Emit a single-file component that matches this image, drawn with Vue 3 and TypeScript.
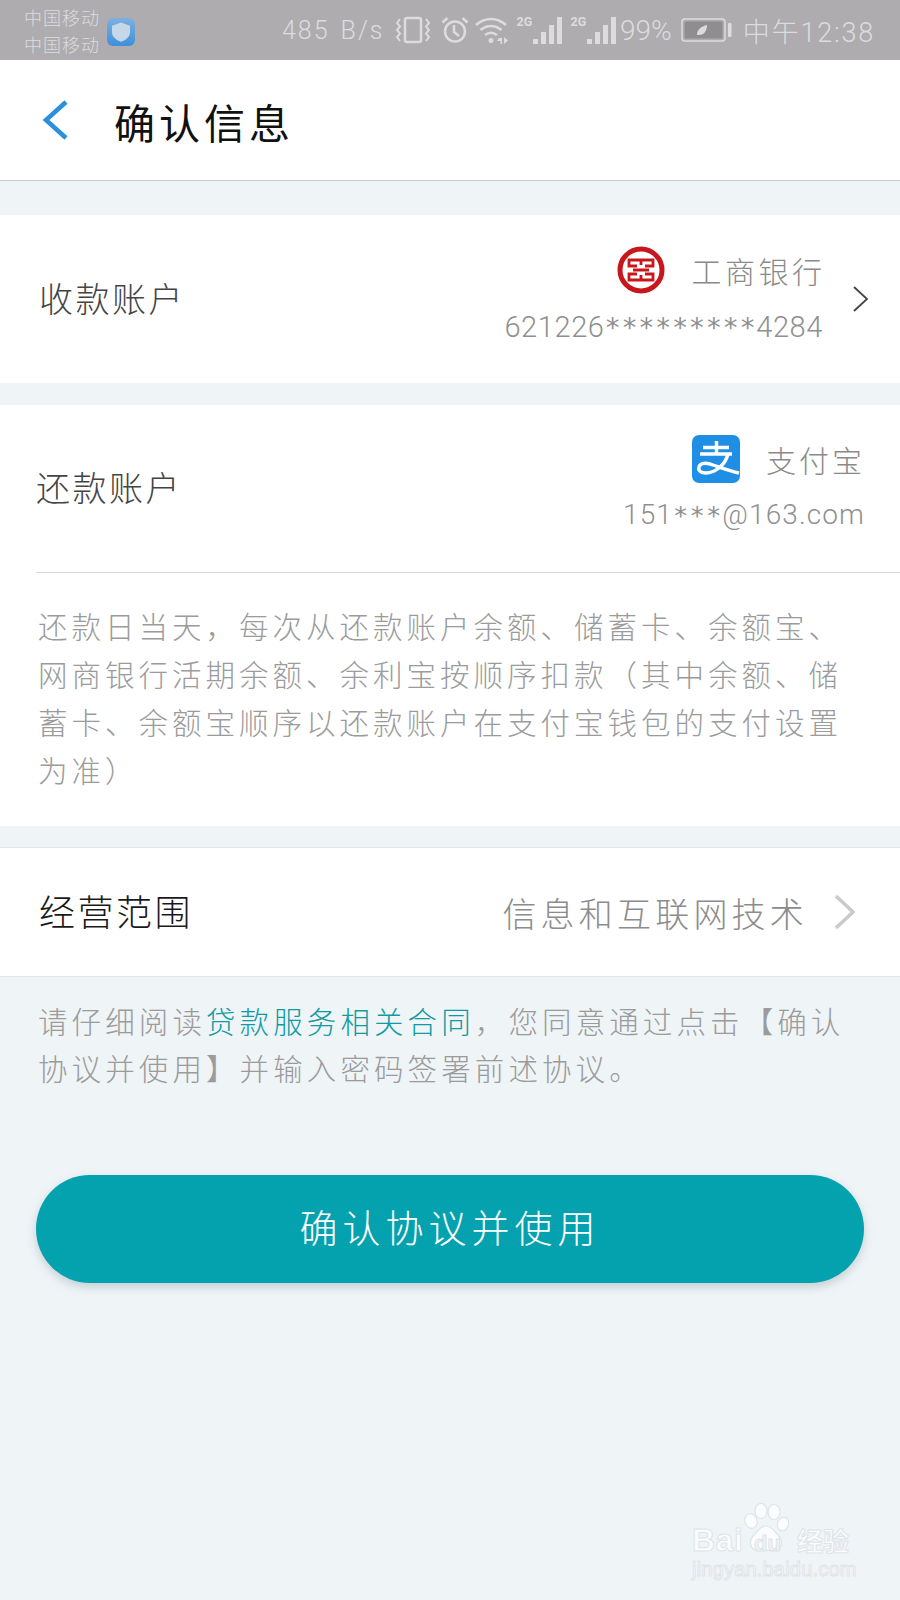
<script setup lang="ts">
const signalBars: number[] = [0, 1]
</script>

<template>
  <div class="page">
    <div class="status">
      <div class="carriers">
        <span>中国移动</span>
        <span>中国移动</span>
      </div>
      <svg class="shield" width="28" height="28" viewBox="0 0 28 28">
        <defs>
          <linearGradient id="sg" x1="0" y1="0" x2="0" y2="1">
            <stop offset="0" stop-color="#7fb0de" />
            <stop offset="1" stop-color="#3f8fdc" />
          </linearGradient>
        </defs>
        <rect width="28" height="28" rx="6" fill="url(#sg)" />
        <path d="M14 4.500l9 3.200v6.300c0 5-4 8-9 9.800-5-1.800-9-4.800-9-9.800V7.700z" fill="#c5d8ea" />
      </svg>
      <div class="status-right">
        <span class="speed">485 B/s</span>
        <svg class="ic-vib" width="36" height="28" viewBox="0 0 36 28" fill="none" stroke="#dcdcde">
          <rect x="10" y="2" width="16" height="24" rx="2" stroke-width="2.500" />
          <path d="M5 3L2 7l3 3.500L2 14l3 3.500L2 21l3 4M31 3l3 4-3 3.500L34 14l-3 3.500L34 21l-3 4" stroke-width="2" />
        </svg>
        <svg class="ic-alarm" width="28" height="28" viewBox="0 0 28 28" fill="none" stroke="#dcdcde" stroke-width="2.500">
          <circle cx="14" cy="15.500" r="10" />
          <path d="M13 9v7l5 4M1.500 6.500l5-4.500M26.500 6.500l-5-4.500" />
        </svg>
        <svg class="ic-wifi" width="34" height="28" viewBox="0 0 34 28" fill="none" stroke="#dcdcde" stroke-width="2.500">
          <path d="M1 9c9-8 21-8 30 0M5.500 14c6.500-5.500 14.500-5.500 21 0M10 19c4-3 8-3 12 0" />
          <circle cx="16" cy="24.500" r="2.500" fill="#dcdcde" stroke="none" />
          <path d="M24 22h3v6h-1.500v-3H22zM29 21l4 3.500-4 3.500z" fill="#dcdcde" stroke="none" />
        </svg>
        <div class="signal" v-for="s in signalBars" :key="s">
          <span class="g2">2G</span>
          <i class="b1"></i><i class="b2"></i><i class="b3"></i><i class="b4"></i>
        </div>
        <span class="pct">99%</span>
        <svg class="ic-batt" width="52" height="26" viewBox="0 0 52 26">
          <rect x="1" y="2" width="43" height="22" rx="3" fill="none" stroke="#dcdcde" stroke-width="1.500" />
          <rect x="3.500" y="4.500" width="38" height="17" rx="1.500" fill="#8f8d90" />
          <path d="M16 18c0-6 5-9 10-10 0 6-3 10-8 10z" fill="#dcdcde" />
          <rect x="47" y="6" width="3.500" height="14" rx="1" fill="#dcdcde" />
        </svg>
        <span class="time">中午12:38</span>
      </div>
    </div>

    <header class="nav">
      <svg width="28" height="40" viewBox="0 0 28 40" fill="none">
        <path d="M25 2L5 20l20 18" stroke="#2a8fdc" stroke-width="4.500" />
      </svg>
      <h1>确认信息</h1>
    </header>

    <section class="card receive">
      <span class="label">收款账户</span>
      <div class="acct">
        <div class="acct-name icbc-name">
          <svg width="48" height="48" viewBox="0 0 48 48" fill="none">
            <circle cx="24" cy="24" r="21" stroke="#c8161d" stroke-width="5" />
            <path d="M20 20H12V14H36V20H28M20 28H12V34H36V28H28M16 24H32M24 14V19M24 29V34" stroke="#c8161d" stroke-width="2.800" />
          </svg>
          <span>工商银行</span>
        </div>
        <div class="acct-no no-a">621226<span class="stars">*********</span>4284</div>
      </div>
      <svg class="chev" width="18" height="28" viewBox="0 0 18 28" fill="none">
        <path d="M2 2l13 12L2 26" stroke="#444" stroke-width="1.800" />
      </svg>
    </section>

    <section class="card repay">
      <div class="repay-top">
        <span class="label">还款账户</span>
        <div class="acct">
          <div class="acct-name alipay-name">
            <svg width="48" height="48" viewBox="0 0 48 48">
              <rect width="48" height="48" rx="7" fill="#1f8fe6" />
              <path d="M11 12.500H37M24.500 6V18M8 19H40M36 19C33 31 22 38 14 38 8 38 6 35 7 32 8 28 14 27 21 30 30 33 38 36 47 38" fill="none" stroke="#fff" stroke-width="3.400" />
            </svg>
            <span>支付宝</span>
          </div>
          <div class="acct-no no-b">151<span class="stars">***</span>@163.com</div>
        </div>
      </div>
      <p class="desc">还款日当天，每次从还款账户余额、储蓄卡、余额宝、网商银行活期余额、余利宝按顺序扣款（其中余额、储蓄卡、余额宝顺序以还款账户在支付宝钱包的支付设置为准）</p>
    </section>

    <section class="card scope">
      <span class="label dark">经营范围</span>
      <div class="scope-right">
        <span>信息和互联网技术</span>
        <svg width="26" height="36" viewBox="0 0 26 36" fill="none">
          <path d="M3 2l17 16L3 34" stroke="#c8cacc" stroke-width="3.500" />
        </svg>
      </div>
    </section>

    <p class="agree">请仔细阅读<a>贷款服务相关合同</a>，您同意通过点击【确认协议并使用】并输入密码签署前述协议。</p>

    <button class="confirm" type="button">确认协议并使用</button>

    <div class="mark">
      <span class="bai">Bai</span>
      <svg class="paw" width="46" height="50" viewBox="0 0 46 50" fill="#fbfcfd" stroke="#dfe4e8" stroke-width="1.200">
        <ellipse cx="8" cy="18" rx="6" ry="7.500" transform="rotate(-20 8 18)" />
        <ellipse cx="18" cy="8" rx="6" ry="7.500" />
        <ellipse cx="31" cy="9" rx="6" ry="7.500" />
        <ellipse cx="40" cy="21" rx="5.500" ry="7" transform="rotate(20 40 21)" />
        <path d="M23 23c6 0 8 5 12 9 6 6 4 16-5 16-3 0-4-1-7-1s-4 1-7 1c-9 0-11-10-5-16 4-4 6-9 12-9z" />
      </svg>
      <span class="du">du</span>
      <span class="jy">经验</span>
      <span class="mark-url">jingyan.baidu.com</span>
    </div>
  </div>
</template>

<style>
html, body { margin: 0; padding: 0; }
</style>

<style scoped>
.page {
  position: relative;
  width: 900px;
  height: 1600px;
  overflow: hidden;
  background: #eff4f7;
  font-family: "Noto Sans CJK SC", "Noto Sans", sans-serif;
  font-weight: 300;
}
.status {
  height: 60px;
  background: #aeacaf;
  display: flex;
  align-items: center;
  padding: 0 25px 0 24px;
  box-sizing: border-box;
  color: #dcdcde;
}
.carriers {
  display: flex;
  flex-direction: column;
  font-size: 18px;
  line-height: 27px;
  letter-spacing: 1px;
  width: 80px;
  white-space: nowrap;
  margin-top: 2px;
}
.shield { margin-left: 3px; margin-top: 3px; }
.status-right {
  margin-left: auto;
  display: flex;
  align-items: center;
}
.speed {
  font-family: "Roboto", sans-serif;
  font-weight: 300;
  font-size: 25px;
  letter-spacing: 2px;
  word-spacing: 3px;
  margin-right: 10px;
  white-space: nowrap;
}
.ic-alarm { margin-left: 10px; }
.ic-wifi { margin-left: 6px; }
.signal {
  position: relative;
  width: 29px;
  height: 28px;
  margin-left: 24px;
  display: flex;
  align-items: flex-end;
  justify-content: flex-end;
  gap: 3px;
}
.signal + .signal { margin-left: 25px; }
.g2 {
  position: absolute;
  left: -16px;
  top: 0;
  font: 700 12.500px/12px "Roboto", sans-serif;
}
.signal i { width: 5px; background: #dcdcde; display: block; }
.b1 { height: 5px; }
.b2 { height: 12px; }
.b3 { height: 19px; }
.b4 { height: 27px; }
.pct { font-family: "Roboto", sans-serif; font-size: 28px; margin-left: 4.500px; white-space: nowrap; }
.ic-batt { margin-left: 9px; }
.time {
  font-family: "Roboto", "Noto Sans CJK SC", sans-serif;
  font-size: 27px;
  letter-spacing: 1.800px;
  margin-left: 10px;
  white-space: nowrap;
}
.nav {
  height: 121px;
  box-sizing: border-box;
  background: #fff;
  border-bottom: 1px solid #c6cdd0;
  display: flex;
  align-items: center;
  padding-left: 41px;
}
.nav h1 {
  margin: 2px 0 0 45px;
  font-size: 41px;
  font-weight: 400;
  letter-spacing: 4px;
  color: #111;
}
.card { background: #fff; }
.label {
  font-size: 34px;
  letter-spacing: 2.500px;
  color: #444;
  white-space: nowrap;
  margin-bottom: 4px;
}
.label.dark { color: #1a1a1a; font-size: 36px; }
.receive {
  margin-top: 34px;
  height: 168px;
  display: flex;
  align-items: center;
  padding: 0 30px 0 39px;
}
.acct {
  margin-left: auto;
  display: flex;
  flex-direction: column;
  align-items: flex-end;
  margin-bottom: 9px;
}
.acct-name {
  display: flex;
  align-items: center;
  gap: 27px;
  font-size: 30px;
  letter-spacing: 3.500px;
  color: #8a8a8a;
  height: 48px;
  white-space: nowrap;
}
.icbc-name { margin-top: 2px; }
.icbc-name span { margin-right: -2.500px; }
.acct-no {
  font-family: "Roboto", sans-serif;
  font-weight: 300;
  color: #8f8f8f;
  line-height: 36px;
  white-space: nowrap;
}
.stars { font-family: "DejaVu Sans Mono", monospace; font-weight: 400; }
.no-a { font-size: 29px; margin-top: 15px; letter-spacing: 0.600px; }
.no-a .stars { font-size: 27px; }
.no-b { font-size: 28px; margin-top: 14px; letter-spacing: 1.100px; }
.no-b .stars { font-size: 25.500px; }
.chev { margin-left: 29px; }
.repay { margin-top: 22px; height: 421px; }
.repay-top {
  height: 168px;
  margin-left: 36px;
  box-sizing: border-box;
  border-bottom: 1px solid #d8d8d8;
  display: flex;
  align-items: center;
  padding-right: 35px;
}
.alipay-name { gap: 26px; letter-spacing: 3px; }
.desc {
  margin: 28px 36px 0 38px;
  font-size: 29.500px;
  line-height: 48px;
  letter-spacing: 4px;
  color: #9b9b9b;
}
.scope {
  margin-top: 21px;
  height: 130px;
  box-sizing: border-box;
  border-top: 1px solid #e0e5e8;
  border-bottom: 1px solid #dfe4e7;
  display: flex;
  align-items: center;
  padding: 0 41px 0 39px;
}
.scope-right {
  margin-left: auto;
  display: flex;
  align-items: center;
  gap: 25px;
  font-size: 34px;
  letter-spacing: 4.200px;
  color: #8c8c8c;
  white-space: nowrap;
}
.agree {
  margin: 20px 44px 0 38px;
  font-size: 29.500px;
  line-height: 47px;
  letter-spacing: 4.100px;
  color: #9b9b9b;
}
.agree a { color: #109aa3; }
.confirm {
  display: block;
  margin: 84px 0 0 36px;
  width: 828px;
  height: 108px;
  border: none;
  border-radius: 54px;
  background: #04a2ae;
  box-shadow: 0 4px 10px rgba(120, 140, 150, 0.350);
  color: #fff;
  font-family: inherit;
  font-weight: 300;
  font-size: 38px;
  letter-spacing: 5px;
  padding: 0 0 7px;
}
.mark {
  position: absolute;
  left: 692px;
  top: 1503px;
  width: 160px;
  height: 80px;
  color: #fbfcfd;
  font-family: "Liberation Sans", sans-serif;
  white-space: nowrap;
}
.mark span { position: absolute; -webkit-text-stroke: 1px #dfe4e8; }
.paw { position: absolute; left: 51px; top: 0; }
.bai { left: 0; top: 19px; font-size: 32px; line-height: 36px; font-weight: 700; letter-spacing: 0.500px; }
.du {
  left: 62px;
  top: 30px;
  font-size: 22px;
  line-height: 22px;
  font-weight: 700;
  color: #eef3f6;
}
.jy { left: 105px; top: 20px; font-family: "Noto Sans CJK SC", sans-serif; font-size: 26px; line-height: 34px; font-weight: 700; }
.mark-url { left: 0; top: 54px; font-size: 20px; line-height: 24px; letter-spacing: 0.200px; }
</style>
